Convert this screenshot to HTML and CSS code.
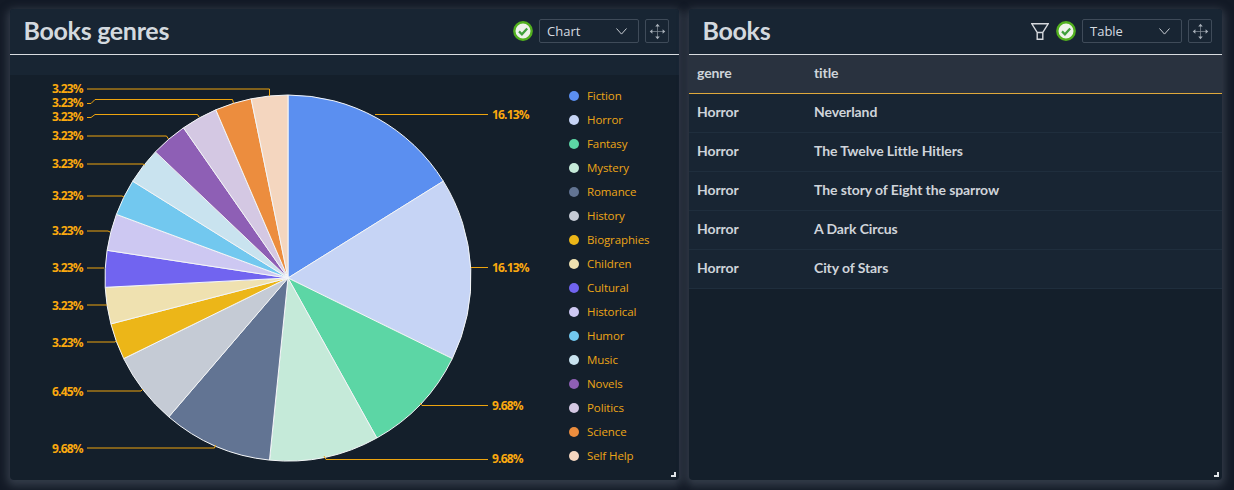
FILE: index.html
```html
<!DOCTYPE html>
<html lang="en">
<head>
<meta charset="utf-8">
<title>Books dashboard</title>
<link rel="stylesheet" href="styles.css">
</head>
<body>
<main class="board">
  <section class="panel">
    <header class="panel-head">
      <h2 class="panel-title">Books genres</h2>
      <div class="tools">
        <svg class="status" viewBox="0 0 20 20"><circle cx="10" cy="10" r="8.700" fill="#eef3ea" stroke="#52b01f" stroke-width="2.400"/><path d="M6 10.400l2.900 2.900L14.200 7.400" fill="none" stroke="#3f9f3a" stroke-width="2.200"/></svg>
        <div class="select"><span>Chart</span><svg class="chev" viewBox="0 0 11 7"><path d="M.5.5l5 5.600 5-5.600" fill="none" stroke="#c9ced4" stroke-width="1"/></svg></div>
        <div class="move"><svg viewBox="0 0 18 18"><path d="M9 2.500v13M2.500 9h13" stroke="#7f8994" stroke-width=".8"/><path d="M9 .8l2.400 2.800H6.600zM9 17.200l2.400-2.800H6.600zM.8 9l2.800-2.400v4.800zM17.200 9l-2.800-2.400v4.800z" fill="#a9b1ba"/></svg></div>
      </div>
    </header>
    <div class="strip"></div>
    <div class="chart">
      <svg class="pie" viewBox="0 0 548 405" aria-label="Pie chart">
        <g transform="translate(-10 -75)">
          <g stroke="#f4f6f8" stroke-width="1" stroke-linejoin="round">
            <path fill="#5b8ff0" d="M288 278V95A183 183 0 0 1 443.300 181.200Z"/>
            <path fill="#c6d4f5" d="M288 278L443.300 181.200A183 183 0 0 1 452.300 358.600Z"/>
            <path fill="#5cd6a5" d="M288 278L452.300 358.600A183 183 0 0 1 376.800 438Z"/>
            <path fill="#c5ead9" d="M288 278L376.800 438A183 183 0 0 1 269.500 460.100Z"/>
            <path fill="#627493" d="M288 278L269.500 460.100A183 183 0 0 1 168.800 416.900Z"/>
            <path fill="#c5cbd5" d="M288 278L168.800 416.900A183 183 0 0 1 123.700 358.600Z"/>
            <path fill="#ecb618" d="M288 278L123.700 358.600A183 183 0 0 1 110.900 323.900Z"/>
            <path fill="#efe1b0" d="M288 278L110.900 323.900A183 183 0 0 1 105.200 287.300Z"/>
            <path fill="#7164f0" d="M288 278L105.200 287.300A183 183 0 0 1 107.100 250.300Z"/>
            <path fill="#cdc8f2" d="M288 278L107.100 250.300A183 183 0 0 1 116.400 214.400Z"/>
            <path fill="#72c8ef" d="M288 278L116.400 214.400A183 183 0 0 1 132.700 181.200Z"/>
            <path fill="#c9e3ef" d="M288 278L132.700 181.200A183 183 0 0 1 155.400 151.900Z"/>
            <path fill="#8e5fb5" d="M288 278L155.400 151.900A183 183 0 0 1 183.500 127.800Z"/>
            <path fill="#d4c8e3" d="M288 278L183.500 127.800A183 183 0 0 1 215.800 109.800Z"/>
            <path fill="#ec8d3e" d="M288 278L215.800 109.800A183 183 0 0 1 251.200 98.800Z"/>
            <path fill="#f4d6bf" d="M288 278L251.200 98.800A183 183 0 0 1 288 95Z"/>
          </g>
          <g class="leaders">
            <path d="M87 89H269.500V96"/>
            <path d="M87 103.500H91L95 99.500H232.500L233.500 103"/>
            <path d="M87 117.500H91L95 114.500H197.500L199 117"/>
            <path d="M87 136H166.500L168.500 139"/>
            <path d="M87 164H143L145 165"/>
            <path d="M87 196H122L124 197"/>
            <path d="M87 231H108L110 232"/>
            <path d="M87 268H104"/>
            <path d="M87 305H107"/>
            <path d="M87 342H115L116 341"/>
            <path d="M87 391H141L143 389"/>
            <path d="M87 448H214.500L215.500 445"/>
            <path d="M375 114.500H488"/>
            <path d="M471 267.500H488"/>
            <path d="M420 403L422 405.500H488"/>
            <path d="M324 456L326 459.500H488"/>
          </g>
          <g class="pct">
            <text x="52" y="93">3.23%</text>
            <text x="52" y="107">3.23%</text>
            <text x="52" y="121">3.23%</text>
            <text x="52" y="139.500">3.23%</text>
            <text x="52" y="167.500">3.23%</text>
            <text x="52" y="199.500">3.23%</text>
            <text x="52" y="234.500">3.23%</text>
            <text x="52" y="271.500">3.23%</text>
            <text x="52" y="309.500">3.23%</text>
            <text x="52" y="346.500">3.23%</text>
            <text x="52" y="395.500">6.45%</text>
            <text x="52" y="452.500">9.68%</text>
            <text x="492" y="118.500">16.13%</text>
            <text x="492" y="271.500">16.13%</text>
            <text x="492" y="409.500">9.68%</text>
            <text x="492" y="463">9.68%</text>
          </g>
        </g>
      </svg>
      <ul class="legend">
        <li><i class="dot c1"></i>Fiction</li>
        <li><i class="dot c2"></i>Horror</li>
        <li><i class="dot c3"></i>Fantasy</li>
        <li><i class="dot c4"></i>Mystery</li>
        <li><i class="dot c5"></i>Romance</li>
        <li><i class="dot c6"></i>History</li>
        <li><i class="dot c7"></i>Biographies</li>
        <li><i class="dot c8"></i>Children</li>
        <li><i class="dot c9"></i>Cultural</li>
        <li><i class="dot c10"></i>Historical</li>
        <li><i class="dot c11"></i>Humor</li>
        <li><i class="dot c12"></i>Music</li>
        <li><i class="dot c13"></i>Novels</li>
        <li><i class="dot c14"></i>Politics</li>
        <li><i class="dot c15"></i>Science</li>
        <li><i class="dot c16"></i>Self Help</li>
      </ul>
    </div>
    <span class="grip"></span>
  </section>
  <section class="panel">
    <header class="panel-head">
      <h2 class="panel-title">Books</h2>
      <div class="tools">
        <svg class="filter" viewBox="0 0 18 17"><path d="M.8.8h16.400L11.800 9.500v6.700H6.200V9.500zM6.200 9.500h5.600" fill="none" stroke="#d5d9de" stroke-width="1.400"/></svg>
        <svg class="status" viewBox="0 0 20 20"><circle cx="10" cy="10" r="8.700" fill="#eef3ea" stroke="#52b01f" stroke-width="2.400"/><path d="M6 10.400l2.900 2.900L14.200 7.400" fill="none" stroke="#3f9f3a" stroke-width="2.200"/></svg>
        <div class="select"><span>Table</span><svg class="chev" viewBox="0 0 11 7"><path d="M.5.5l5 5.600 5-5.600" fill="none" stroke="#c9ced4" stroke-width="1"/></svg></div>
        <div class="move"><svg viewBox="0 0 18 18"><path d="M9 2.500v13M2.500 9h13" stroke="#7f8994" stroke-width=".8"/><path d="M9 .8l2.400 2.800H6.600zM9 17.200l2.400-2.800H6.600zM.8 9l2.800-2.400v4.800zM17.200 9l-2.800-2.400v4.800z" fill="#a9b1ba"/></svg></div>
      </div>
    </header>
    <table class="grid">
      <thead><tr><th class="col-genre">genre</th><th>title</th></tr></thead>
      <tbody>
        <tr><td>Horror</td><td>Neverland</td></tr>
        <tr><td>Horror</td><td>The Twelve Little Hitlers</td></tr>
        <tr><td>Horror</td><td>The story of Eight the sparrow</td></tr>
        <tr><td>Horror</td><td>A Dark Circus</td></tr>
        <tr><td>Horror</td><td>City of Stars</td></tr>
      </tbody>
    </table>
    <span class="grip"></span>
  </section>
</main>
</body>
</html>
```
FILE: styles.css
```css
* { box-sizing: border-box; }
html, body { margin: 0; height: 100%; }
body {
  background: #131a26;
  font-family: "Open Sans", "Liberation Sans", sans-serif;
  overflow: hidden;
}
.board {
  display: grid;
  grid-template-columns: 669px 533px;
  gap: 10px;
  padding: 9px 0 0 10px;
  height: 480px;
}
.panel {
  position: relative;
  display: flex;
  flex-direction: column;
  background: #141f2b;
  border-radius: 4px;
  box-shadow: 0 3px 8px 3px rgba(84, 94, 108, .5);
}
.panel-head {
  display: flex;
  align-items: center;
  justify-content: space-between;
  height: 46px;
  padding: 0 10px 1px 13.500px;
  background: #182533;
  border-bottom: 1px solid #d8dce0;
  border-radius: 4px 4px 0 0;
}
.panel-title {
  margin: 0 0 2px;
  font-family: Lato, "Open Sans", sans-serif;
  font-size: 25px;
  font-weight: 700;
  letter-spacing: -.3px;
  color: #d3d9df;
}
.tools { display: flex; align-items: center; gap: 6px; }
.status { width: 20px; height: 20px; }
.filter { width: 18px; height: 17px; margin-right: 1px; }
.select {
  display: flex;
  align-items: center;
  justify-content: space-between;
  width: 100px;
  height: 24px;
  padding: 0 11px 0 7px;
  border: 1px solid #3f4b59;
  border-radius: 2px;
  font-size: 13px;
  color: #d6dbe0;
}
.chev { width: 11px; height: 7px; }
.move {
  display: flex;
  align-items: center;
  justify-content: center;
  width: 24px;
  height: 24px;
  border: 1px solid #3f4b59;
  border-radius: 2px;
}
.move svg { width: 17px; height: 17px; }
.strip { height: 20px; background: #182533; }
.chart { display: flex; flex: 1; }
.pie { display: block; width: 548px; height: 405px; flex: none; }
.leaders path { fill: none; stroke: #eda40f; stroke-width: 1; }
.pct text { font-size: 12px; font-weight: 700; letter-spacing: -.8px; fill: #fba90f; }
.legend {
  list-style: none;
  margin: 0;
  padding: 8.500px 0 0 11px;
  font-size: 11.500px;
  letter-spacing: -.1px;
  color: #eca517;
}
.legend li { display: flex; align-items: center; height: 24px; }
.dot { width: 10px; height: 10px; margin-right: 8px; border-radius: 50%; }
.c1 { background: #5b8ff0; }
.c2 { background: #c6d4f5; }
.c3 { background: #5cd6a5; }
.c4 { background: #c5ead9; }
.c5 { background: #627493; }
.c6 { background: #c5cbd5; }
.c7 { background: #ecb618; }
.c8 { background: #efe1b0; }
.c9 { background: #7164f0; }
.c10 { background: #cdc8f2; }
.c11 { background: #72c8ef; }
.c12 { background: #c9e3ef; }
.c13 { background: #8e5fb5; }
.c14 { background: #d4c8e3; }
.c15 { background: #ec8d3e; }
.c16 { background: #f4d6bf; }
.grid {
  width: 100%;
  border-collapse: collapse;
  font-family: Lato, "Open Sans", sans-serif;
  font-size: 14px;
  font-weight: 700;
  letter-spacing: -.1px;
  color: #cfd4da;
}
.grid th, .grid td { padding: 0 8px 2px; text-align: left; }
.grid th { height: 38px; background: #29323f; font-weight: 700; border-bottom: 1px solid #dfa93c; }
.col-genre { width: 117px; }
.grid td { height: 39px; background: #182533; border-bottom: 1px solid #1f2e3d; }
.grip {
  position: absolute;
  right: 3px;
  bottom: 3px;
  width: 5px;
  height: 5px;
  background: linear-gradient(#dfe3e8, #dfe3e8) right / 2px 100% no-repeat,
              linear-gradient(#dfe3e8, #dfe3e8) bottom / 100% 2px no-repeat;
}
```
